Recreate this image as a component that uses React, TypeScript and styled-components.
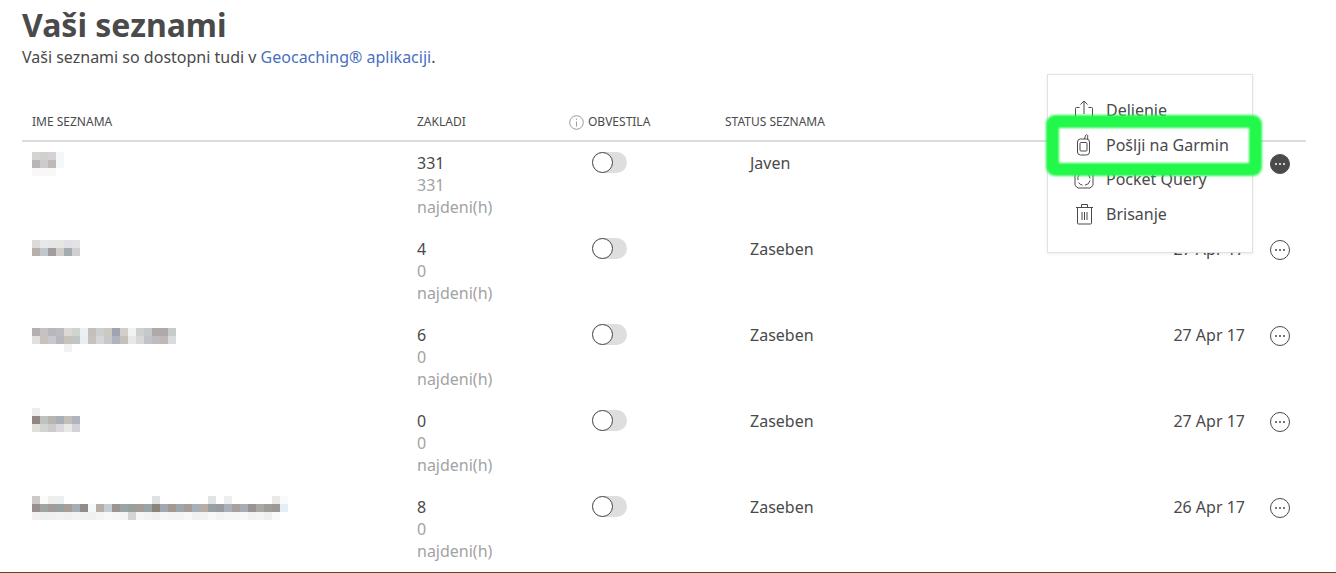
import {FC} from 'react'
import styled, {createGlobalStyle} from 'styled-components'

const GlobalStyle = createGlobalStyle`
  html, body {
    margin: 0;
    padding: 0;
    height: 573px;
    overflow: hidden;
    background: #fff;
    font-family: "Noto Sans", sans-serif;
    color: #4a4a4a;
  }
`

const Page = styled.div`
  position: relative;
  width: 1336px;
  height: 573px;
  overflow: hidden;
`
const Content = styled.main`
  padding: 0 30px 0 22px;
`
const Title = styled.h1`
  margin: 0;
  padding-top: 3px;
  font-size: 32px;
  line-height: 43px;
  font-weight: 700;
  color: #4a4a4a;
`
const Subtitle = styled.p`
  margin: 0;
  font-size: 16px;
  line-height: 22px;
`
const Link = styled.a`
  color: #4a6fc0;
  text-decoration: none;
`
const columns = '385px 150px 158px 150px 1fr 51px'
const HeaderRow = styled.div`
  display: grid;
  grid-template-columns: ${columns};
  margin-top: 42px;
  height: 24px;
  padding-bottom: 6px;
  border-bottom: 2px solid #dcdcdc;
  align-items: center;
  font-size: 12px;
  line-height: 16px;
`
const HeaderCell = styled.div<{$indent?: number}>`
  padding-left: ${p => p.$indent ?? 10}px;
  display: flex;
  align-items: center;
  gap: 4px;
  white-space: nowrap;
`
const Row = styled.div`
  display: grid;
  grid-template-columns: ${columns};
  height: 86px;
  font-size: 16px;
  line-height: 22px;
`
const Cell = styled.div<{$indent?: number}>`
  padding: 10px 0 0 ${p => p.$indent ?? 10}px;
`
const DateCell = styled.div`
  padding: 10px 10px 0 0;
  text-align: right;
`
const Found = styled.div`
  color: #a3a3a3;
`
const Track = styled.span`
  display: block;
  width: 35px;
  height: 21px;
  border-radius: 11px;
  background: #dedede;
`
const Knob = styled.span`
  display: block;
  width: 21px;
  height: 21px;
  box-sizing: border-box;
  border-radius: 50%;
  background: #fff;
  border: 1px solid #444;
`
const MoreButton = styled.span<{$active?: boolean}>`
  display: flex;
  align-items: center;
  justify-content: center;
  gap: 2px;
  width: 20px;
  height: 20px;
  margin-top: 2px;
  box-sizing: border-box;
  border-radius: 50%;
  border: 1px solid #4a4a4a;
  background: ${p => (p.$active ? '#4a4a4a' : '#fff')};
  color: ${p => (p.$active ? '#fff' : '#4a4a4a')};
`
const Dot = styled.i`
  display: block;
  width: 2px;
  height: 2px;
  border-radius: 50%;
  background: currentColor;
`
const MosaicFrame = styled.svg<{$top: number}>`
  display: block;
  margin-top: ${p => p.$top}px;
`
const Menu = styled.div`
  position: absolute;
  left: 1047px;
  top: 74px;
  width: 206px;
  height: 179px;
  box-sizing: border-box;
  padding: 18px 0 0 26px;
  background: #fff;
  border: 1px solid #e2e2e2;
  box-shadow: 0 1px 3px rgba(0, 0, 0, 0.08);
`
const MenuItem = styled.div`
  display: flex;
  align-items: center;
  height: 34.5px;
  font-size: 16px;
  color: #4a4a4a;
`
const MenuIcon = styled.span`
  display: flex;
  justify-content: center;
  width: 20px;
  margin-right: 12px;
`
const Highlight = styled.div`
  position: absolute;
  left: -2px;
  top: 40px;
  width: 216px;
  height: 61px;
  box-sizing: border-box;
  border: 13px solid #22f84a;
  border-radius: 9px;
  filter: blur(0.8px);
`
const BottomLine = styled.div`
  position: absolute;
  left: 0;
  right: 0;
  bottom: 0;
  height: 1px;
  background: #5c4a1f;
`

const Mosaic: FC<{top: number; lines: string[][]}> = ({top, lines}) => {
  const cols = Math.max(...lines.map(l => l.length))
  return (
    <MosaicFrame $top={top} width={cols * 8} height={lines.length * 8}>
      {lines.map((line, y) =>
        line.map((c, x) => (c ? <rect key={x + '-' + y} x={x * 8} y={y * 8} width={8} height={8} fill={'#' + c} /> : null))
      )}
    </MosaicFrame>
  )
}

const split = (s: string) => s.split(' ').map(c => (c === '-' ? '' : c))

const InfoIcon = () => (
  <svg width="15" height="15" viewBox="0 0 15 15" fill="none" stroke="#9b9b9b">
    <circle cx="7.5" cy="7.5" r="6.8" />
    <path d="M7.5 6.5v5M7.5 3.6v1.2" />
  </svg>
)
const ShareIcon = () => (
  <svg width="20" height="22" viewBox="0 0 20 22" fill="none" stroke="#4a4a4a" strokeWidth="1">
    <path d="M5.5 8.5H2.5a1 1 0 0 0-1 1v10h17v-10a1 1 0 0 0-1-1h-3" />
    <path d="M10 15V2M6.5 5.5 10 2l3.5 3.5" />
  </svg>
)
const GarminIcon = () => (
  <svg width="15" height="23" viewBox="0 0 15 23" fill="none" stroke="#4a4a4a" strokeWidth="1">
    <path d="M7.5 6 8.5 2.5a1.2 1.2 0 0 1 2.2 0V6" />
    <rect x="0.5" y="6" width="12" height="16" rx="3" />
    <rect x="3" y="9.5" width="7" height="8.5" rx="1" />
  </svg>
)
const QueryIcon = () => (
  <svg width="20" height="22" viewBox="0 0 20 22" fill="none" stroke="#4a4a4a" strokeWidth="1">
    <path d="M1 2v15.5l3 2.5h12l3-2.5V2" />
    <path d="M4 12a6 6 0 0 1 4-7.2M12 5a6 6 0 0 1 4 5.5M16 12.500a6 6 0 0 1-5 4.700M8.500 17.200A6 6 0 0 1 4.500 14.500" />
  </svg>
)
const TrashIcon = () => (
  <svg width="19" height="22" viewBox="0 0 19 22" fill="none" stroke="#4a4a4a" strokeWidth="1">
    <path d="M1 4.500h17M6.500 4V1.500h6V4" />
    <path d="M2.500 5v15a1 1 0 0 0 1 1h12a1 1 0 0 0 1-1V5" />
    <path d="M7 9v8M9.500 9v8M12 9v8" />
  </svg>
)

const More: FC<{active?: boolean}> = ({active}) => (
  <MoreButton $active={active}>
    <Dot />
    <Dot />
    <Dot />
  </MoreButton>
)

const rows = [
  {
    top: 0,
    lines: ['d4d4d4 d2d0cc d4d2d2 f3f7f9', 'b8b6b6 cecccb bfbaba f5f8fa', 'f8f8f8 f8f8f8 f8f8f8'],
    total: 331,
    found: 331,
    status: 'Javen',
    date: '27 Apr 17'
  },
  {
    top: 2,
    lines: ['dcdbda e6e8ea e6e6e8 e6e6e2 dfe1e6 e3e3e5', 'b8aeaa c0c8cd a09c9f d0cec8 a4abb2 d0d0d0'],
    total: 4,
    found: 0,
    status: 'Zaseben',
    date: '27 Apr 17'
  },
  {
    top: 4,
    lines: [
      'b4b0b0 c4c2c2 b8b8bc bcbcbe dcd8d4 d0d4d0 ecf0f2 c4bebc ccced0 ccc8c2 a0a4b0 d4cec8 f2f2f2 ccd0ce c4cacc aeaaaa aeaaaa c6cccc',
      'e0e0e0 c8c2be c8c8d0 b8b8bc c8c2bc c0c6c4 e8eef2 c8c2be d6d6d8 c8c8ca b0b4be c6c0ba e8e8e8 d6d8da c0c4c8 bebcbc c0b8b6 d8dcdc',
      '- - - - f2f2f2'
    ],
    total: 6,
    found: 0,
    status: 'Zaseben',
    date: '27 Apr 17'
  },
  {
    top: -2,
    lines: ['ededed', '908684 c0c2c0 b8b4b0 a8b0b6 c4beb8 b0b4c0', 'e2dedc d2d4d4 cccaca d8d8de eae8e4 d2d2d8'],
    total: 0,
    found: 0,
    status: 'Zaseben',
    date: '27 Apr 17'
  },
  {
    top: 0,
    lines: [
      'cccac8 fafcfc f0eeec eceef0 - - - - - - - - - - - e0e2e2 - - - - - - e2e4e4 - eeeeee - - - - - ece8e8 f8fafc',
      '989090 a0a4a2 a09c9a 98a0a0 a89e98 a4aeb6 908c8c f4f8fa b8aea6 c4ccd6 9c9490 98a4a8 98a09e a49c98 98a4a8 8c8478 a0a8b4 a49890 9ca8ac a89c98 a4b0ba b8aca4 98a0a4 989ca0 a8b0ba a8a09c a8acb4 989494 a8a8a4 a09c9c 9c9898 e4eef6',
      'f4f0f0 eef0f0 f0f0f0 f2f2f2 f0f0f0 f2f4f4 f0f2f2 f0f0f0 f4f4f4 f8f8f8 f6f6f6 f4f4f4 d4d4d4 f6f6f6 f2f4f4 f0f0f0 f6f6f6 f4f4f4 f2f4f6 f8f8f6 f0f2f2 f2f2f2 f6f8fa f4f2f2 f6f6f6 f6f6f6 f8f8f6 f2f2f2 f4f4f4 f0eeee fafafa'
    ],
    total: 8,
    found: 0,
    status: 'Zaseben',
    date: '26 Apr 17'
  }
]

const App: FC = () => (
  <Page>
    <GlobalStyle />
    <Content>
      <Title>Vaši seznami</Title>
      <Subtitle>
        Vaši seznami so dostopni tudi v <Link>Geocaching® aplikaciji</Link>.
      </Subtitle>
      <HeaderRow>
        <HeaderCell>IME SEZNAMA</HeaderCell>
        <HeaderCell>ZAKLADI</HeaderCell>
        <HeaderCell $indent={12}>
          <InfoIcon />
          OBVESTILA
        </HeaderCell>
        <HeaderCell>STATUS SEZNAMA</HeaderCell>
        <HeaderCell />
        <HeaderCell />
      </HeaderRow>
      {rows.map((row, i) => (
        <Row key={i}>
          <Cell>
            <Mosaic top={row.top} lines={row.lines.map(split)} />
          </Cell>
          <Cell>
            <div>{row.total}</div>
            <Found>{row.found}</Found>
            <Found>najdeni(h)</Found>
          </Cell>
          <Cell $indent={35}>
            <Track>
              <Knob />
            </Track>
          </Cell>
          <Cell $indent={35}>{row.status}</Cell>
          <DateCell>{row.date}</DateCell>
          <Cell $indent={15}>
            <More active={i === 0} />
          </Cell>
        </Row>
      ))}
    </Content>
    <Menu>
      <MenuItem>
        <MenuIcon>
          <ShareIcon />
        </MenuIcon>
        Delienie
      </MenuItem>
      <MenuItem>
        <MenuIcon>
          <GarminIcon />
        </MenuIcon>
        Pošlji na Garmin
      </MenuItem>
      <MenuItem>
        <MenuIcon>
          <QueryIcon />
        </MenuIcon>
        Pocket Query
      </MenuItem>
      <MenuItem>
        <MenuIcon>
          <TrashIcon />
        </MenuIcon>
        Brisanje
      </MenuItem>
      <Highlight />
    </Menu>
    <BottomLine />
  </Page>
)

export default App
